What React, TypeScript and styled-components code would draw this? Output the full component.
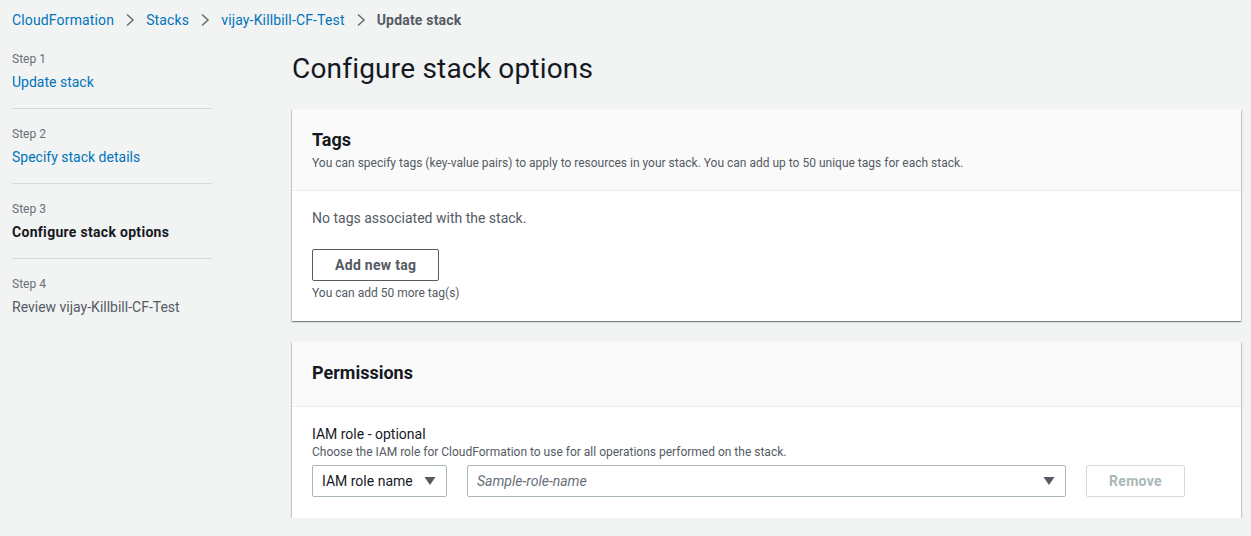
import React from 'react'
import styled, { createGlobalStyle } from 'styled-components'

const GlobalStyle = createGlobalStyle`
  body {
    margin: 0;
    background: #f2f3f3;
    font-family: Roboto, "Open Sans", sans-serif;
    color: #16191f;
  }
`

const Page = styled.div`
  padding: 0 10px 0 12px;
`

const Breadcrumbs = styled.nav`
  display: flex;
  align-items: center;
  height: 40px;
  font-size: 14px;
`

const Crumb = styled.a<{ current?: boolean }>`
  color: ${({ current }) => (current ? '#545b64' : '#0073bb')};
  font-weight: ${({ current }) => (current ? 700 : 400)};
  letter-spacing: ${({ current }) => (current ? '0.2px' : '0.15px')};
  text-decoration: none;
`

const Chevron = styled.span`
  display: inline-flex;
  margin: 0 11px;
`

const Layout = styled.div`
  display: grid;
  grid-template-columns: 200px 1fr;
  column-gap: 80px;
`

const Steps = styled.ol`
  list-style: none;
  margin: 0;
  padding: 0;
`

const Step = styled.li`
  padding: 17px 0 16px;
  border-bottom: 1px solid #d5dbdb;
  &:first-child {
    padding-top: 11px;
  }
  &:last-child {
    border-bottom: none;
  }
`

const StepNumber = styled.div`
  font-size: 12px;
  color: #687078;
  line-height: 16px;
  margin-bottom: 5px;
`

const StepLabel = styled.div<{ state: 'link' | 'active' | 'disabled' }>`
  font-size: 14px;
  line-height: 20px;
  color: ${({ state }) => (state === 'link' ? '#0073bb' : state === 'active' ? '#16191f' : '#545b64')};
  font-weight: ${({ state }) => (state === 'active' ? 700 : 400)};
  letter-spacing: ${({ state }) => (state === 'active' ? '0.3px' : '0')};
`

const Main = styled.main`
  display: flex;
  flex-direction: column;
  gap: 21px;
`

const Title = styled.h1`
  margin: 11px 0 1px;
  font-size: 28px;
  font-weight: 400;
  line-height: 36px;
  letter-spacing: 0.2px;
  color: #16191f;
`

const Card = styled.section`
  background: #fff;
  box-shadow: 0 1px 1px 0 rgba(0, 28, 36, 0.3), 1px 1px 1px 0 rgba(0, 28, 36, 0.15),
    -1px 1px 1px 0 rgba(0, 28, 36, 0.15);
`

const CardHeader = styled.header<{ tall?: boolean }>`
  display: flex;
  flex-direction: column;
  gap: 3px;
  background: #fafafa;
  border-bottom: 1px solid #eaeded;
  padding: ${({ tall }) => (tall ? '19px 20px 21px' : '19px 20px 19px')};
`

const CardTitle = styled.h2`
  margin: 0;
  font-size: 18px;
  line-height: 24px;
  font-weight: 700;
`

const CardDesc = styled.p`
  margin: 0;
  font-size: 12px;
  line-height: 16px;
  color: #545b64;
`

const CardBody = styled.div<{ loose?: boolean }>`
  padding: ${({ loose }) => (loose ? '17px 20px 21px' : '16px 20px 20px')};
`

const Muted = styled.p`
  margin: 0 0 20px;
  font-size: 14px;
  line-height: 22px;
  color: #545b64;
`

const Button = styled.button<{ disabled?: boolean }>`
  height: 32px;
  padding: 0 22px;
  background: #fff;
  border: 1px solid ${({ disabled }) => (disabled ? '#d5dbdb' : '#545b64')};
  color: ${({ disabled }) => (disabled ? '#aab7b8' : '#545b64')};
  font-family: inherit;
  font-size: 14px;
  font-weight: 700;
  letter-spacing: 0.3px;
  border-radius: 2px;
`

const Hint = styled.div`
  margin-top: 4px;
  font-size: 12px;
  line-height: 16px;
  color: #545b64;
`

const Label = styled.div`
  font-size: 14px;
  line-height: 20px;
  color: #16191f;
`

const FieldRow = styled.div`
  display: flex;
  align-items: center;
  gap: 20px;
  margin-top: 5px;
`

const Select = styled.div<{ grow?: boolean }>`
  display: flex;
  align-items: center;
  justify-content: space-between;
  height: 32px;
  box-sizing: border-box;
  padding: 0 10px 0 9px;
  border: 1px solid #aab7b8;
  border-radius: 2px;
  background: #fff;
  font-size: 14px;
  width: ${({ grow }) => (grow ? '599px' : '135px')};
`

const Placeholder = styled.span`
  font-style: italic;
  color: #687078;
`

const Caret = () => (
  <svg width="12" height="10" viewBox="0 0 12 10">
    <path d="M0.5 1 L11.5 1 L6 9 Z" fill="#545b64" />
  </svg>
)

const ChevronIcon = () => (
  <svg width="10" height="14" viewBox="0 0 10 14">
    <path d="M2 1.5 L8 7 L2 12.5" fill="none" stroke="#687078" strokeWidth="1.6" />
  </svg>
)

const steps: { n: number; label: string; state: 'link' | 'active' | 'disabled' }[] = [
  { n: 1, label: 'Update stack', state: 'link' },
  { n: 2, label: 'Specify stack details', state: 'link' },
  { n: 3, label: 'Configure stack options', state: 'active' },
  { n: 4, label: 'Review vijay-Killbill-CF-Test', state: 'disabled' },
]

export default function App() {
  return (
    <>
      <GlobalStyle />
      <Page>
        <Breadcrumbs>
          <Crumb>CloudFormation</Crumb>
          <Chevron><ChevronIcon /></Chevron>
          <Crumb>Stacks</Crumb>
          <Chevron><ChevronIcon /></Chevron>
          <Crumb>vijay-Killbill-CF-Test</Crumb>
          <Chevron><ChevronIcon /></Chevron>
          <Crumb current>Update stack</Crumb>
        </Breadcrumbs>
        <Layout>
          <Steps>
            {steps.map((s) => (
              <Step key={s.n}>
                <StepNumber>Step {s.n}</StepNumber>
                <StepLabel state={s.state}>{s.label}</StepLabel>
              </Step>
            ))}
          </Steps>
          <Main>
            <Title>Configure stack options</Title>
            <Card>
              <CardHeader>
                <CardTitle>Tags</CardTitle>
                <CardDesc>
                  You can specify tags (key-value pairs) to apply to resources in your stack. You can add up to 50
                  unique tags for each stack.
                </CardDesc>
              </CardHeader>
              <CardBody>
                <Muted>No tags associated with the stack.</Muted>
                <Button>Add new tag</Button>
                <Hint>You can add 50 more tag(s)</Hint>
              </CardBody>
            </Card>
            <Card>
              <CardHeader tall>
                <CardTitle>Permissions</CardTitle>
              </CardHeader>
              <CardBody loose>
                <Label>IAM role - optional</Label>
                <CardDesc>Choose the IAM role for CloudFormation to use for all operations performed on the stack.</CardDesc>
                <FieldRow>
                  <Select>
                    <span>IAM role name</span>
                    <Caret />
                  </Select>
                  <Select grow>
                    <Placeholder>Sample-role-name</Placeholder>
                    <Caret />
                  </Select>
                  <Button disabled>Remove</Button>
                </FieldRow>
              </CardBody>
            </Card>
          </Main>
        </Layout>
      </Page>
    </>
  )
}
